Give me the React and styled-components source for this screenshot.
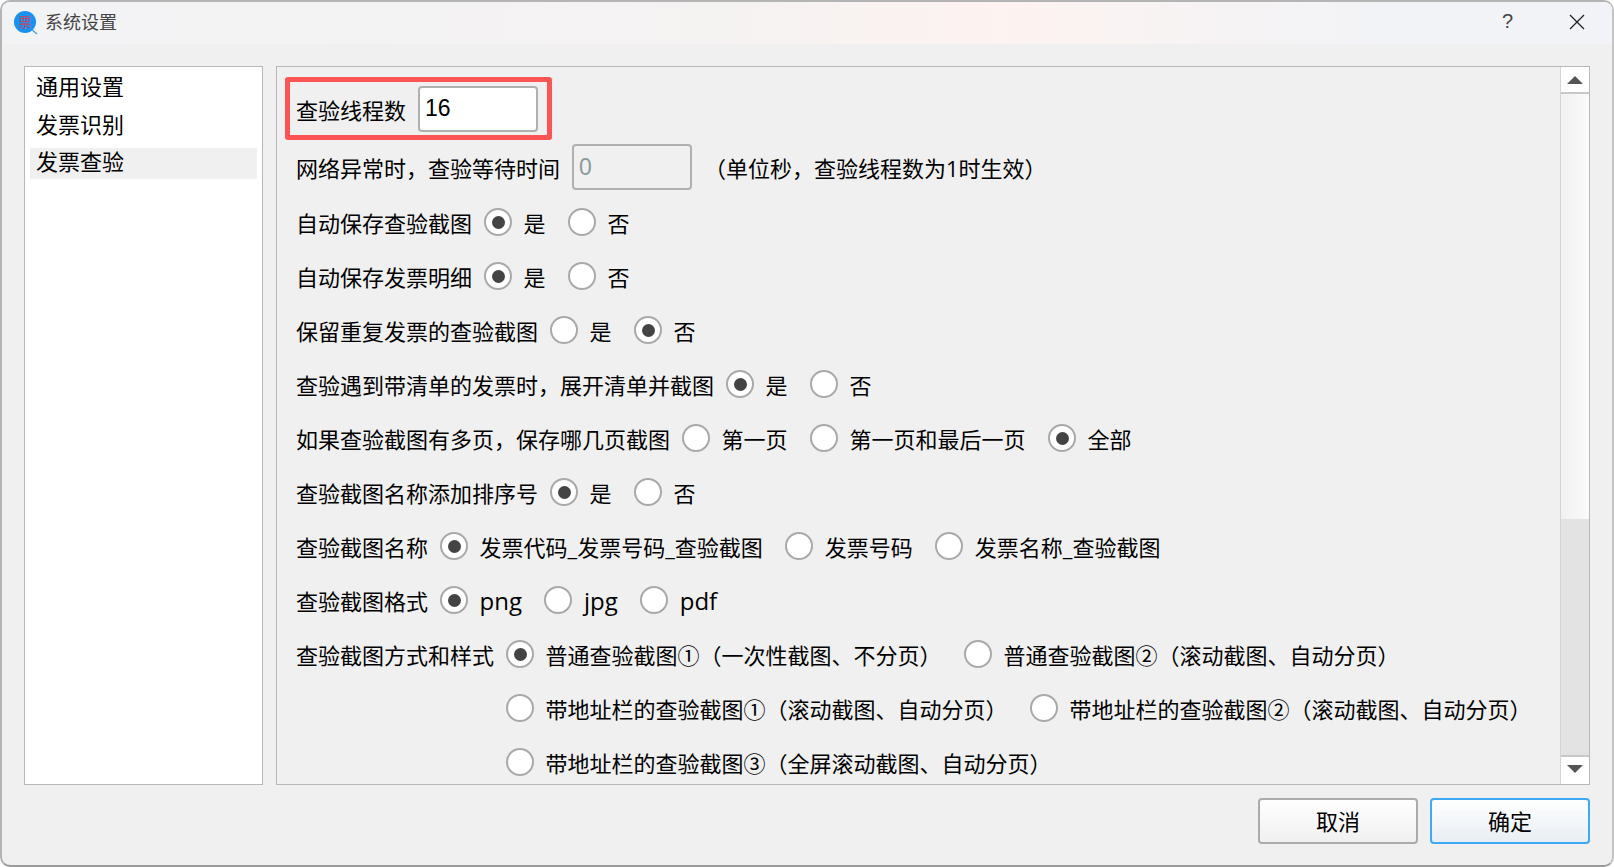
import styled, { createGlobalStyle } from "styled-components";

const GlobalStyle = createGlobalStyle`
html, body {
    margin: 0;
    padding: 0;
    background: #ffffff;
}
* {
    box-sizing: border-box;
}
`;

const App = () => {
    return (
        <Dialog>
            <GlobalStyle />
            <TitleBar>
                <AppIcon viewBox="0 0 24 24">
                    <line x1="17" y1="18" x2="23" y2="23" stroke="#4aa3ea" strokeWidth="1.5" />
                    <circle cx="11" cy="11" r="11" fill="#1892f0" />
                    <text x="11" y="16" textAnchor="middle" fontSize="13" fill="#c9435a" fontFamily="Noto Sans CJK SC">票</text>
                </AppIcon>
                <Title>系统设置</Title>
                <Help>?</Help>
                <CloseIcon viewBox="0 0 16 16">
                    <path d="M1 1 L15 15 M15 1 L1 15" stroke="#222" strokeWidth="1.3" fill="none" />
                </CloseIcon>
            </TitleBar>
            <Body>
                <Sidebar>
                    <SideItem>通用设置</SideItem>
                    <SideItem>发票识别</SideItem>
                    <SideItem $active>发票查验</SideItem>
                </Sidebar>
                <Panel>
                    <Form>
                        <Row $height="61px">
                            <Highlight>
                                <Label>查验线程数</Label>
                                <NumberInput defaultValue="16" />
                            </Highlight>
                        </Row>
                        <Row $height="56px">
                            <Label>网络异常时，查验等待时间</Label>
                            <NumberInput defaultValue="0" disabled />
                            <Hint>（单位秒，查验线程数为1时生效）</Hint>
                        </Row>
                        <Row>
                            <Label>自动保存查验截图</Label>
                            <Option checked>是</Option>
                            <Option>否</Option>
                        </Row>
                        <Row>
                            <Label>自动保存发票明细</Label>
                            <Option checked>是</Option>
                            <Option>否</Option>
                        </Row>
                        <Row>
                            <Label>保留重复发票的查验截图</Label>
                            <Option>是</Option>
                            <Option checked>否</Option>
                        </Row>
                        <Row>
                            <Label>查验遇到带清单的发票时，展开清单并截图</Label>
                            <Option checked>是</Option>
                            <Option>否</Option>
                        </Row>
                        <Row>
                            <Label>如果查验截图有多页，保存哪几页截图</Label>
                            <Option>第一页</Option>
                            <Option>第一页和最后一页</Option>
                            <Option checked>全部</Option>
                        </Row>
                        <Row>
                            <Label>查验截图名称添加排序号</Label>
                            <Option checked>是</Option>
                            <Option>否</Option>
                        </Row>
                        <Row>
                            <Label>查验截图名称</Label>
                            <Option checked>发票代码_发票号码_查验截图</Option>
                            <Option>发票号码</Option>
                            <Option>发票名称_查验截图</Option>
                        </Row>
                        <Row>
                            <Label>查验截图格式</Label>
                            <Option checked><Latin>png</Latin></Option>
                            <Option><Latin>jpg</Latin></Option>
                            <Option><Latin>pdf</Latin></Option>
                        </Row>
                        <Row>
                            <Label>查验截图方式和样式</Label>
                            <Option checked>普通查验截图①（一次性截图、不分页）</Option>
                            <Option>普通查验截图②（滚动截图、自动分页）</Option>
                        </Row>
                        <Row $indent>
                            <Option>带地址栏的查验截图①（滚动截图、自动分页）</Option>
                            <Option>带地址栏的查验截图②（滚动截图、自动分页）</Option>
                        </Row>
                        <Row $indent>
                            <Option>带地址栏的查验截图③（全屏滚动截图、自动分页）</Option>
                        </Row>
                    </Form>
                    <Scrollbar>
                        <ScrollButton>
                            <Arrow />
                        </ScrollButton>
                        <ScrollTrack />
                        <ScrollThumb />
                        <ScrollButton $down>
                            <Arrow $down />
                        </ScrollButton>
                    </Scrollbar>
                </Panel>
            </Body>
            <Footer>
                <DialogButton>取消</DialogButton>
                <DialogButton $primary>确定</DialogButton>
            </Footer>
        </Dialog>
    );
}

const Option = ({ checked, children }) => (
    <OptionWrap>
        <Radio $checked={checked} />
        <span>{children}</span>
    </OptionWrap>
);

const Dialog = styled.div`
width: 1614px;
height: 867px;
overflow: hidden;
display: flex;
flex-direction: column;
background: #f0f0f0;
border: 2px solid #b4b4b4;
border-right-color: #c4c4c4;
border-bottom-color: #9a9a9a;
border-radius: 10px;
font-family: "Open Sans", "Noto Sans CJK SC", sans-serif;
font-size: 22px;
color: #000;
`;

const TitleBar = styled.div`
height: 42px;
flex-shrink: 0;
display: flex;
align-items: center;
padding: 0 27px 0 12px;
background: linear-gradient(90deg, #f2f3f5 0%, #f5f2f2 45%, #fdf3f1 62%, #f2f3f6 85%);
`;

const AppIcon = styled.svg`
width: 24px;
height: 24px;
`;

const Title = styled.div`
margin: -4px 0 0 7px;
font-size: 18px;
color: #444;
flex: 1;
`;

const Help = styled.div`
font-family: "Liberation Sans", sans-serif;
font-size: 20px;
color: #444;
margin: -3px 56px 0 0;
`;

const CloseIcon = styled.svg`
width: 16px;
height: 16px;
margin-top: -2px;
`;

const Body = styled.div`
height: 719px;
flex-shrink: 0;
margin-top: 22px;
padding: 0 22px;
display: flex;
gap: 13px;
`;

const Sidebar = styled.div`
width: 239px;
flex-shrink: 0;
background: #fff;
border: 1px solid #b8b8b8;
padding: 6px 5px;
`;

const SideItem = styled.div`
height: 31px;
margin-bottom: 6.5px;
display: flex;
align-items: center;
padding: 0 0 7px 6px;
background: ${(p) => (p.$active ? "#f0f0f0" : "transparent")};
`;

const Panel = styled.div`
flex: 1;
min-width: 0;
display: flex;
border: 1px solid #b8b8b8;
overflow: hidden;
`;

const Form = styled.div`
flex: 1;
min-width: 0;
padding: 11px 0 0 19px;
display: flex;
flex-direction: column;
overflow: hidden;
`;

const Row = styled.div`
height: ${(p) => p.$height || "54px"};
flex-shrink: 0;
display: flex;
align-items: center;
white-space: nowrap;
padding-left: ${(p) => (p.$indent ? "210px" : "0")};
`;

const Highlight = styled.div`
width: 267px;
height: 63px;
margin-left: -11px;
padding-left: 6px;
display: flex;
align-items: center;
border: 5px solid #fb5454;
border-radius: 3px;
`;

const Label = styled.span`
margin-right: 12px;
`;

const NumberInput = styled.input`
width: 120px;
height: 46px;
padding: 0 5px;
border: 2px solid #b0b0b0;
border-radius: 4px;
background: ${(p) => (p.disabled ? "#f0f0f0" : "#fff")};
color: ${(p) => (p.disabled ? "#8a9a9a" : "#000")};
font-family: "Liberation Sans", sans-serif;
font-size: 23px;
outline: none;
`;

const Hint = styled.span`
margin-left: 12px;
`;

const OptionWrap = styled.label`
display: inline-flex;
align-items: center;
gap: 11.5px;
margin-right: 22.5px;
`;

const Radio = styled.span`
width: 28px;
height: 28px;
flex-shrink: 0;
border-radius: 50%;
border: 2px solid #a9a9a9;
background: #fff;
display: flex;
align-items: center;
justify-content: center;
&::after {
    content: "";
    display: ${(p) => (p.$checked ? "block" : "none")};
    width: 13px;
    height: 13px;
    border-radius: 50%;
    background: #444;
}
`;

const Latin = styled.span`
font-size: 24px;
`;

const Scrollbar = styled.div`
width: 29px;
flex-shrink: 0;
display: flex;
flex-direction: column;
border-left: 1px solid #d4d4d4;
background: #f4f4f4;
`;

const ScrollButton = styled.div`
height: ${(p) => (p.$down ? "29px" : "27px")};
flex-shrink: 0;
background: #fff;
display: flex;
align-items: center;
justify-content: center;
padding-bottom: ${(p) => (p.$down ? "3px" : "0")};
border-bottom: ${(p) => (p.$down ? "none" : "2px solid #c8c8c8")};
border-top: ${(p) => (p.$down ? "2px solid #c8c8c8" : "none")};
`;

const Arrow = styled.div`
width: 0;
height: 0;
border-left: 8px solid transparent;
border-right: 8px solid transparent;
border-bottom: ${(p) => (p.$down ? "none" : "8px solid #555")};
border-top: ${(p) => (p.$down ? "8px solid #555" : "none")};
`;

const ScrollTrack = styled.div`
flex: 1;
background: linear-gradient(90deg, #f1f1f1, #fafafa);
`;

const ScrollThumb = styled.div`
height: 236px;
flex-shrink: 0;
background: #e3e3e3;
`;

const Footer = styled.div`
flex: 1;
display: flex;
justify-content: flex-end;
gap: 12px;
padding: 13px 22px 0 0;
`;

const DialogButton = styled.button`
width: 160px;
height: 46px;
border-radius: 4px;
border: 2px solid ${(p) => (p.$primary ? "#3fa9f5" : "#ababab")};
background: linear-gradient(180deg, #ffffff, ${(p) => (p.$primary ? "#e8eef4" : "#f0f0f0")});
font-family: "Noto Sans CJK SC", "Liberation Sans", sans-serif;
font-size: 22px;
color: #000;
padding: 0 0 2px;
`;

export default App
